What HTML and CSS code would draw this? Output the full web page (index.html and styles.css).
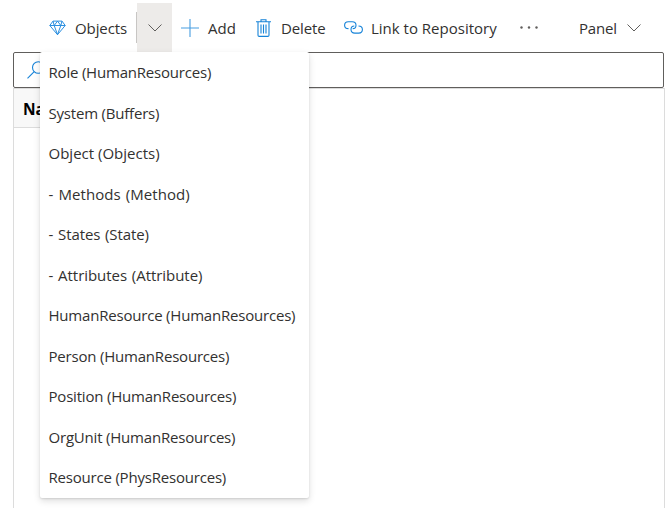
FILE: index.html
```html
<!DOCTYPE html>
<html lang="en">
<head>
<meta charset="utf-8">
<title>Objects</title>
<link rel="stylesheet" href="styles.css">
</head>
<body>
<div class="toolbar">
  <button class="command objects">
    <svg class="icon" width="17" height="16" viewBox="0 0 17 16"><path d="M4 1.1h9l3.2 4.4L8.5 14.7.8 5.5zM.8 5.5h15.4M4 1.1l1.2 4.4 3.3 9.2 3.3-9.2L13 1.1M5.2 5.5l3.3-4.4 3.3 4.4"/></svg>
    <span>Objects</span>
  </button>
  <button class="split" aria-label="Choose object type">
    <svg width="14" height="8" viewBox="0 0 14 8"><path d="M.5.5 7 7 13.5.5"/></svg>
  </button>
  <button class="command add">
    <svg class="icon" width="18" height="18" viewBox="0 0 18 18"><path d="M9 0v18M0 9h18"/></svg>
    <span>Add</span>
  </button>
  <button class="command delete">
    <svg class="icon" width="15" height="18" viewBox="0 0 15 18"><path d="M0 2.7h15M5 2.5V.7h5v1.8M2 3v13.2q0 1.2 1.2 1.2h8.6q1.2 0 1.2-1.2V3M5 5.5v9M7.5 5.5v9M10 5.5v9"/></svg>
    <span>Delete</span>
  </button>
  <button class="command link">
    <svg class="icon" width="19" height="13" viewBox="0 0 19 13"><path d="M4.5 7.6C2 7.6.6 6.2.6 4.2S2.2.7 4.3.7h3.9c2.1 0 3.8 1.5 3.8 3.5S10.5 7.6 8.7 7.6M14.5 5c2.4 0 3.9 1.3 3.9 3.5s-1.6 3.6-3.7 3.6h-3.9C8.7 12.1 7 10.6 7 8.5S8.5 5 10.3 5"/></svg>
    <span>Link to Repository</span>
  </button>
  <button class="more" aria-label="More">
    <svg width="18" height="3" viewBox="0 0 18 3"><circle cx="1.5" cy="1.5" r="1.2"/><circle cx="9" cy="1.5" r="1.2"/><circle cx="16.5" cy="1.5" r="1.2"/></svg>
  </button>
  <button class="command panel">
    <span>Panel</span>
    <svg class="chevron" width="14" height="8" viewBox="0 0 14 8"><path d="M.5.5 7 7 13.5.5"/></svg>
  </button>
</div>
<div class="search">
  <svg class="icon" width="18" height="18" viewBox="0 0 18 18"><circle cx="11.3" cy="6.5" r="5.8"/><path d="M7.2 10.6.5 17.3"/></svg>
</div>
<div class="grid">
  <div class="grid-head">Name</div>
</div>
<ul class="menu">
  <li>Role (HumanResources)</li>
  <li>System (Buffers)</li>
  <li class="loose">Object (Objects)</li>
  <li class="member method">- Methods (Method)</li>
  <li class="member">- States (State)</li>
  <li class="member attribute">- Attributes (Attribute)</li>
  <li>HumanResource (HumanResources)</li>
  <li>Person (HumanResources)</li>
  <li>Position (HumanResources)</li>
  <li>OrgUnit (HumanResources)</li>
  <li>Resource (PhysResources)</li>
</ul>
</body>
</html>
```
FILE: styles.css
```css
* { box-sizing: border-box; }
body {
  margin: 0;
  height: 508px;
  overflow: hidden;
  display: flex;
  flex-direction: column;
  background: #fff;
  color: #323130;
  font: 15px/20px "Open Sans", "Noto Sans", sans-serif;
  letter-spacing: -0.2px;
}
svg { display: block; flex: none; fill: none; stroke: #605e5c; stroke-width: 1; }
.icon { stroke: #1683d8; stroke-width: 1.1; }
.toolbar { display: flex; height: 52px; padding: 3px 0 0 49px; flex: none; }
button {
  display: flex;
  align-items: center;
  border: 0;
  padding: 0;
  background: none;
  color: inherit;
  font: inherit;
  letter-spacing: inherit;
  white-space: nowrap;
}
.command { flex: none; }
.objects { width: 88px; gap: 9px; position: relative; letter-spacing: -0.1px; }
.objects .icon { stroke: #2b8fe0; stroke-width: 1; }
.objects::after { content: ""; position: absolute; right: 0; top: 9px; width: 1px; height: 31px; background: #c8c6c4; }
.split { width: 35px; justify-content: center; background: #edebe9; }
.add { width: 75px; padding-left: 9px; gap: 9px; letter-spacing: 0; }
.add .icon { stroke: #479de1; }
.delete { width: 89px; padding-left: 9px; gap: 10px; letter-spacing: -0.1px; }
.link { width: 175px; padding-left: 8px; gap: 8px; letter-spacing: 0; }
.more { width: 58px; padding-left: 9px; }
.more svg { fill: #605e5c; stroke: none; }
.panel { padding-left: 10px; gap: 10px; }
.search {
  display: flex;
  align-items: center;
  width: 651px;
  height: 36px;
  margin-left: 13px;
  padding-left: 13px;
  flex: none;
  border: 1px solid #605e5c;
  border-radius: 2px;
}
.grid { width: 652px; flex: 1; margin-left: 13px; border: 1px solid #dcdcdc; border-bottom: 0; border-top: 1px solid #dcdcdc; }
.grid-head {
  width: 220px;
  height: 39px;
  padding: 10px 9px 0;
  border-bottom: 1px solid #dcdcdc;
  background: #f8f8f8;
  color: #000;
  font-size: 15.5px;
  font-weight: 700;
  line-height: 20px;
}
.menu {
  position: absolute;
  left: 40px;
  top: 52px;
  width: 269px;
  height: 446px;
  margin: 0;
  padding: 0 0 0 8.5px;
  list-style: none;
  background: #fff;
  border-radius: 2px;
  box-shadow: 0 3px 7px rgba(0,0,0,.13), 0 1px 2px rgba(0,0,0,.11);
}
.menu li { height: 40.5px; line-height: 40.5px; white-space: nowrap; }
.menu .loose { letter-spacing: 0; }
.menu .member { letter-spacing: -0.1px; word-spacing: 1px; }
.menu .method { letter-spacing: 0.08px; }
.menu .attribute { letter-spacing: -0.05px; }
```
